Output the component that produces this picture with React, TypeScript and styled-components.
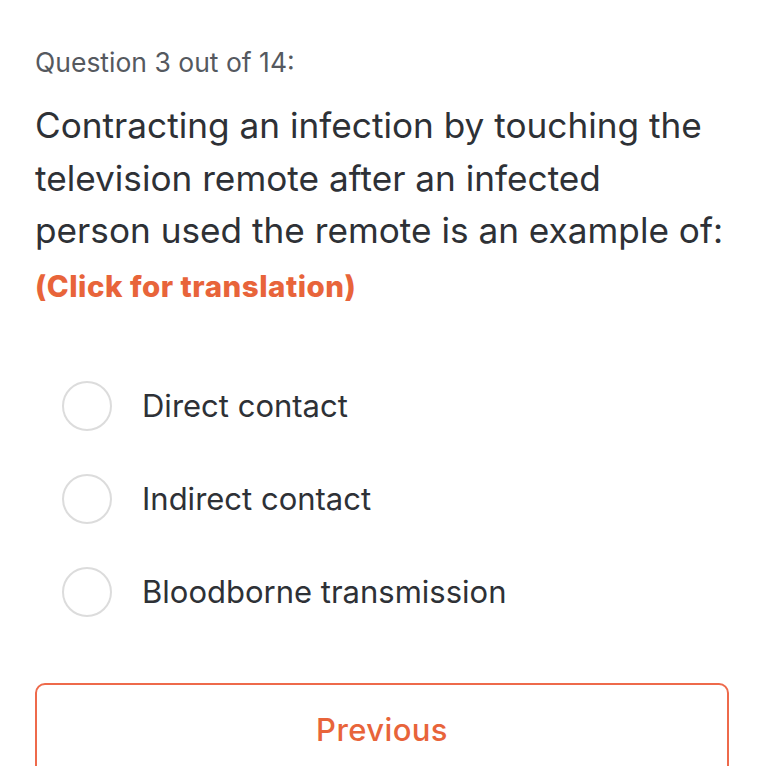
import React from "react";
import styled, { createGlobalStyle } from "styled-components";

const Global = createGlobalStyle`
  html, body { margin: 0; padding: 0; background: #ffffff; }
  body { font-family: Inter, "Noto Sans", sans-serif; -webkit-font-smoothing: antialiased; }
`;

const Page = styled.main`
  padding: 45px 28px 0 35px;
  display: flex;
  flex-direction: column;
`;

const Counter = styled.div`
  font-size: 26.5px;
  line-height: 34px;
  color: #55595f;
  font-weight: 400;
`;

const QuestionText = styled.h1`
  margin: 20px 0 0;
  font-size: 35.2px;
  line-height: 52.5px;
  font-weight: 400;
  color: #2e3136;
  white-space: nowrap;
`;

const TranslateLink = styled.button`
  align-self: flex-start;
  margin-top: 10px;
  padding: 0;
  border: none;
  background: none;
  font-family: Inter, sans-serif;
  font-size: 29.5px;
  line-height: 38px;
  font-weight: 800;
  letter-spacing: 0.5px;
  color: #e8643a;
  cursor: pointer;
`;

const Options = styled.ul`
  list-style: none;
  margin: 76px 0 0;
  padding: 0 0 0 27px;
  display: flex;
  flex-direction: column;
  gap: 43px;
`;

const Option = styled.li`
  display: flex;
  align-items: center;
  gap: 30px;
  height: 50px;
`;

const Radio = styled.span`
  box-sizing: border-box;
  width: 50px;
  height: 50px;
  border-radius: 50%;
  border: 2px solid #dcdcdc;
  flex-shrink: 0;
`;

const OptionLabel = styled.span`
  font-size: 31px;
  color: #2e3136;
`;

const PrevButton = styled.button`
  box-sizing: border-box;
  margin: 66px 4px 0 0;
  height: 100px;
  border: 2px solid #ee6a4b;
  border-radius: 10px;
  background: #fff;
  display: flex;
  justify-content: center;
  padding-top: 26px;
  font-family: Inter, sans-serif;
  font-size: 31px;
  font-weight: 500;
  letter-spacing: 0.4px;
  color: #e8643a;
`;

const options = ["Direct contact", "Indirect contact", "Bloodborne transmission"];

export default function App() {
  return (
    <>
      <Global />
      <Page>
        <Counter>Question 3 out of 14:</Counter>
        <QuestionText>
          Contracting an infection by touching the
          <br />
          television remote after an infected
          <br />
          person used the remote is an example of:
        </QuestionText>
        <TranslateLink>(Click for translation)</TranslateLink>
        <Options>
          {options.map((o) => (
            <Option key={o}>
              <Radio />
              <OptionLabel>{o}</OptionLabel>
            </Option>
          ))}
        </Options>
        <PrevButton>Previous</PrevButton>
      </Page>
    </>
  );
}
